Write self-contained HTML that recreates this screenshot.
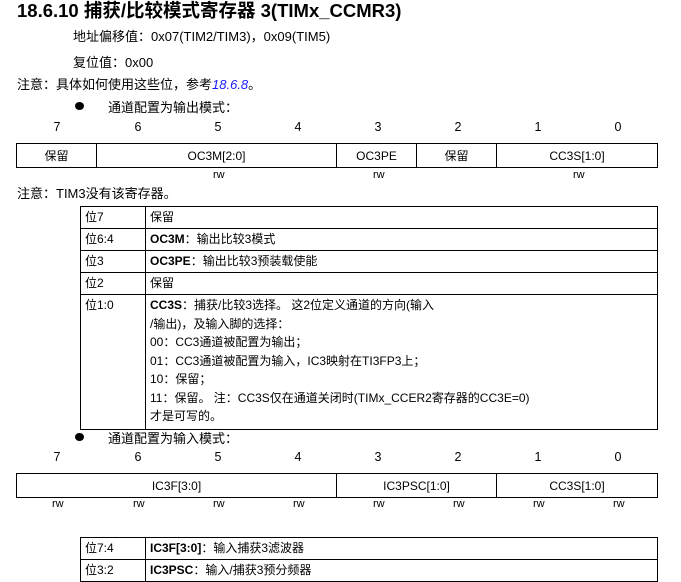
<!DOCTYPE html>
<html><head><meta charset="utf-8"><style>
body{margin:0;width:681px;height:576px;overflow:hidden;background:#fff;position:relative;font-family:"Liberation Sans","Noto Sans CJK SC",sans-serif;color:#000;font-size:13px}
.a{position:absolute;white-space:nowrap}
.t{position:absolute;border-collapse:collapse}
.reg td{border:1.5px solid #000;text-align:center;font-size:12px;padding:0;height:23px}
.d td{border:1px solid #000;padding:0 4px;font-size:12px;vertical-align:top;height:21px;line-height:21px}
.n{position:absolute;font-size:12.5px;width:20px;text-align:center}
.b{position:absolute;width:9px;height:8px;border-radius:50%;background:#000}
</style></head><body>
<div class="a" style="left:17px;top:-3px;font-size:18.5px;font-weight:bold">18.6.10 捕获/比较模式寄存器 3(TIMx_CCMR3)</div>
<div class="a" style="left:73px;top:26px">地址偏移值：0x07(TIM2/TIM3)，0x09(TIM5)</div>
<div class="a" style="left:73px;top:52px">复位值：0x00</div>
<div class="a" style="left:17px;top:74px">注意：具体如何使用这些位，参考<i style="color:#1a1aff">18.6.8</i>。</div>
<div class="b" style="left:75px;top:102px"></div>
<div class="a" style="left:108px;top:97px">通道配置为输出模式：</div>
<div class="n" style="left:47px;top:120px">7</div><div class="n" style="left:128px;top:120px">6</div><div class="n" style="left:208px;top:120px">5</div><div class="n" style="left:288px;top:120px">4</div><div class="n" style="left:368px;top:120px">3</div><div class="n" style="left:448px;top:120px">2</div><div class="n" style="left:528px;top:120px">1</div><div class="n" style="left:608px;top:120px">0</div>
<table class="t reg" style="left:16px;top:143px;width:642px"><tr><td style="width:79px">保留</td><td style="width:239px">OC3M[2:0]</td><td style="width:79px">OC3PE</td><td style="width:79px">保留</td><td>CC3S[1:0]</td></tr></table>
<div class="a" style="left:213px;top:169px;font-size:11px">rw</div><div class="a" style="left:373px;top:169px;font-size:11px">rw</div><div class="a" style="left:573px;top:169px;font-size:11px">rw</div>
<div class="a" style="left:17px;top:183px">注意：TIM3没有该寄存器。</div>
<table class="t d" style="left:80px;top:206px;width:578px">
<tr><td style="width:56px">位7</td><td>保留</td></tr>
<tr><td>位6:4</td><td><b>OC3M</b>：输出比较3模式</td></tr>
<tr><td>位3</td><td><b>OC3PE</b>：输出比较3预装载使能</td></tr>
<tr><td>位2</td><td>保留</td></tr>
<tr><td>位1:0</td><td style="line-height:18.5px;padding-top:1px;padding-bottom:3px"><b>CC3S</b>：捕获/比较3选择。 这2位定义通道的方向(输入<br>/输出)，及输入脚的选择：<br>00：CC3通道被配置为输出；<br>01：CC3通道被配置为输入，IC3映射在TI3FP3上；<br>10：保留；<br>11：保留。 注：CC3S仅在通道关闭时(TIMx_CCER2寄存器的CC3E=0)<br>才是可写的。</td></tr>
</table>
<div class="b" style="left:75px;top:433px"></div>
<div class="a" style="left:108px;top:428px">通道配置为输入模式：</div>
<div class="n" style="left:47px;top:450px">7</div><div class="n" style="left:128px;top:450px">6</div><div class="n" style="left:208px;top:450px">5</div><div class="n" style="left:288px;top:450px">4</div><div class="n" style="left:368px;top:450px">3</div><div class="n" style="left:448px;top:450px">2</div><div class="n" style="left:528px;top:450px">1</div><div class="n" style="left:608px;top:450px">0</div>
<table class="t reg" style="left:16px;top:473px;width:642px"><tr><td style="width:319px">IC3F[3:0]</td><td style="width:159px">IC3PSC[1:0]</td><td>CC3S[1:0]</td></tr></table>
<div class="a" style="left:52px;top:498px;font-size:11px">rw</div><div class="a" style="left:133px;top:498px;font-size:11px">rw</div><div class="a" style="left:213px;top:498px;font-size:11px">rw</div><div class="a" style="left:293px;top:498px;font-size:11px">rw</div><div class="a" style="left:373px;top:498px;font-size:11px">rw</div><div class="a" style="left:453px;top:498px;font-size:11px">rw</div><div class="a" style="left:533px;top:498px;font-size:11px">rw</div><div class="a" style="left:613px;top:498px;font-size:11px">rw</div>
<table class="t d" style="left:80px;top:537px;width:578px">
<tr><td style="width:56px">位7:4</td><td><b>IC3F[3:0]</b>：输入捕获3滤波器</td></tr>
<tr><td>位3:2</td><td><b>IC3PSC</b>：输入/捕获3预分频器</td></tr>
</table>
</body></html>
